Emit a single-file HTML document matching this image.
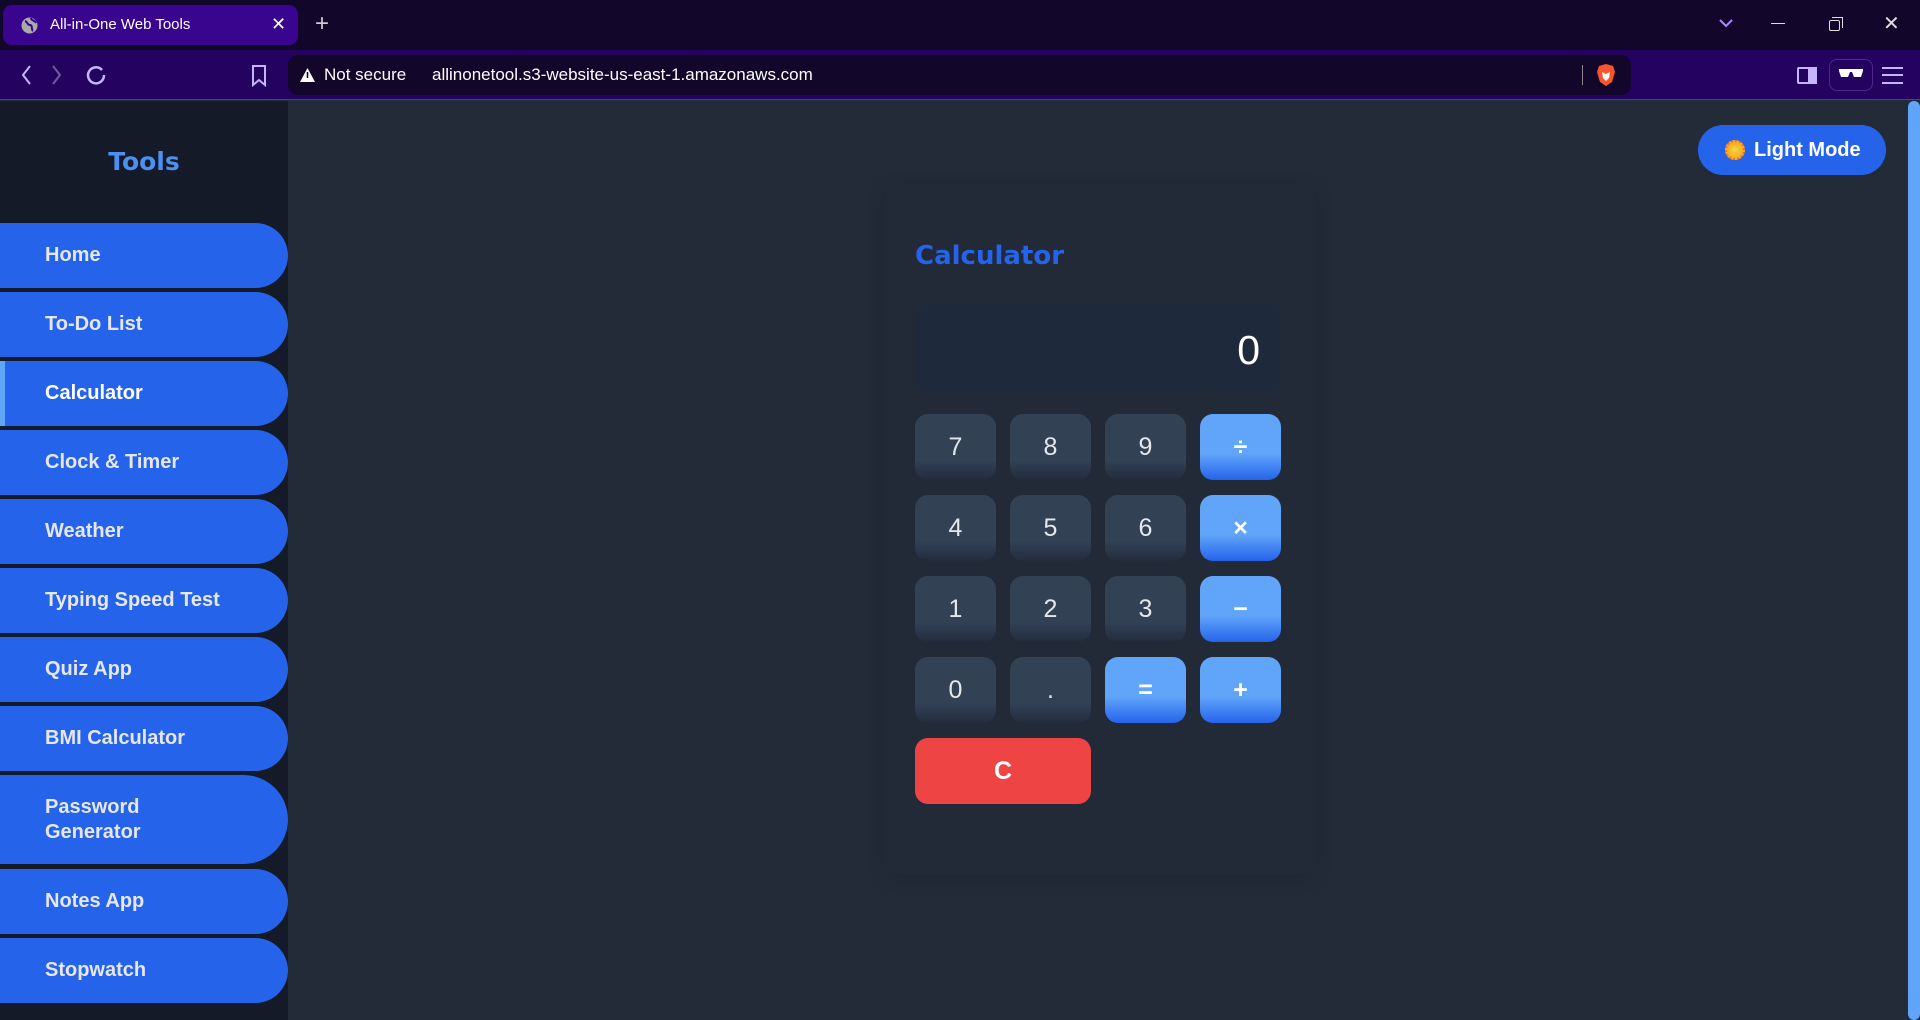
<!DOCTYPE html>
<html><head><meta charset="utf-8"><style>
*{box-sizing:border-box;margin:0;padding:0}
body{width:1920px;height:1020px;overflow:hidden;background:#232b39;font-family:"Liberation Sans",sans-serif;position:relative}
.tabbar{position:absolute;left:0;top:0;width:1920px;height:50px;background:#13062b}
.tab{position:absolute;left:3px;top:5px;width:295px;height:40px;background:#39058f;border-radius:9px;color:#fff;font-size:15px}
.toolbar{position:absolute;left:0;top:50px;width:1920px;height:50px;background:#23035f;border-bottom:1px solid #5a2fa8}
.url{position:absolute;left:288px;top:5px;width:1343px;height:40px;background:#13062b;border-radius:10px;color:#fff;font-size:17px}
.side{position:absolute;left:0;top:101px;width:288px;height:919px;background:#141a28}
.tools{position:absolute;top:46px;left:0;width:288px;text-align:center;color:#4d8ff0;font-weight:bold;font-size:25px;font-family:"DejaVu Sans",sans-serif}
.nav{position:absolute;left:0;width:288px;height:65px;background:#2563eb;border-radius:0 33px 33px 0;color:#e5e7eb;font-weight:bold;font-size:20px;padding-left:45px;display:flex;align-items:center;line-height:25px}
.nav.act{border-left:5px solid #60a5fa;padding-left:40px;color:#fff}
.card{position:absolute;left:884px;top:184px;width:432px;height:690px;background:#222a38;border-radius:16px;box-shadow:0 4px 20px rgba(0,0,0,.12)}
.title{position:absolute;left:915px;top:241px;color:#2563eb;font-weight:bold;font-size:26px;font-family:"DejaVu Sans",sans-serif}
.disp{position:absolute;left:915px;top:304px;width:365px;height:88px;background:#1e293b;border-radius:12px;color:#fff;font-size:41px;text-align:right;padding-right:20px;line-height:92px}
.b{position:absolute;width:81px;height:66px;border-radius:13px;background:linear-gradient(#334155 0,#334155 70%,#222c3d 100%);color:#e5e7eb;font-size:25px;text-align:center;line-height:66px}
.o{background:linear-gradient(#60a5fa 0,#60a5fa 60%,#2563eb 100%);color:#fff;font-weight:bold}
.c{background:#ef4444;color:#fff;font-weight:bold;width:176px}
.lm{position:absolute;left:1698px;top:125px;width:188px;height:50px;background:#2563eb;border-radius:25px;color:#fff;font-weight:bold;font-size:20px;line-height:50px;padding-left:56px}
.sun{position:absolute;left:27px;top:15px;width:20px;height:20px;border-radius:50%;background:radial-gradient(#fcd34d,#f59e0b);border:2px dotted #f97316}
.sb{position:absolute;left:1908px;top:101px;width:12px;height:919px;background:#60a5fa;border-radius:6px}
</style></head><body>
<div class="tabbar">
<div class="tab"><svg style="position:absolute;left:18px;top:12px" width="17" height="17"><circle cx="8.5" cy="8.5" r="8" fill="#aaa"/><path d="M4 4c3 1 2 4 5 4s1 5 3 6M10 1c0 3 4 2 5 5" stroke="#39058f" stroke-width="2" fill="none"/></svg><span style="position:absolute;left:47px;top:11px">All-in-One Web Tools</span><span style="position:absolute;left:268px;top:9px;font-size:18px">✕</span></div>
<span style="position:absolute;left:315px;top:10px;color:#ccc;font-size:24px">+</span>
<svg style="position:absolute;left:1718px;top:18px" width="16" height="10"><path d="M2 2l6 6 6-6" stroke="#a78bfa" stroke-width="2" fill="none"/></svg>
<div style="position:absolute;left:1771px;top:23px;width:14px;height:1px;background:#ddd"></div>
<div style="position:absolute;left:1829px;top:20px;width:11px;height:11px;border:1px solid #ddd;border-radius:2px"></div>
<div style="position:absolute;left:1832px;top:17px;width:11px;height:11px;border-top:1px solid #ddd;border-right:1px solid #ddd"></div>
<span style="position:absolute;left:1883px;top:11px;color:#ddd;font-size:20px">✕</span>
</div>
<div class="toolbar">
<svg style="position:absolute;left:18px;top:14px" width="90" height="22"><path d="M12 2L5 11l7 9" stroke="#c4b5fd" stroke-width="2" fill="none"/><path d="M35 2l7 9-7 9" stroke="#6d5aa0" stroke-width="2" fill="none"/><path d="M84 6a8 8 0 1 0 2 5" stroke="#c4b5fd" stroke-width="2.5" fill="none"/></svg>
<svg style="position:absolute;left:251px;top:15px" width="16" height="22"><path d="M2 1h12v19l-6-5-6 5z" stroke="#c4b5fd" stroke-width="2" fill="none"/></svg>
<div class="url"><svg style="position:absolute;left:11px;top:12px" width="17" height="16"><path d="M8.5 1L16 15H1z" fill="#fff"/><rect x="7.7" y="5" width="1.6" height="6" fill="#13062b"/></svg><span style="position:absolute;left:36px;top:10px">Not secure</span><span style="position:absolute;left:144px;top:10px">allinonetool.s3-website-us-east-1.amazonaws.com</span><div style="position:absolute;left:1294px;top:10px;width:1px;height:20px;background:#888"></div><svg style="position:absolute;left:1308px;top:8px" width="20" height="24"><path d="M3 3l7-2 7 2 2 6-3 10-6 4-6-4-3-10z" fill="#fb542b"/><path d="M6 9l4 2 4-2-1 6-3 3-3-3z" fill="#fff"/></svg></div>
<div style="position:absolute;left:1797px;top:17px;width:20px;height:17px;border:2px solid #c4b5fd;border-radius:2px"></div><div style="position:absolute;left:1808px;top:17px;width:9px;height:17px;background:#c4b5fd"></div>
<div style="position:absolute;left:1829px;top:9px;width:44px;height:32px;border:1px solid #4c2a8a;border-radius:8px"></div>
<svg style="position:absolute;left:1839px;top:18px" width="24" height="12"><path d="M0 1h24v2l-2 6h-7l-2-5h-2l-2 5H2L0 3z" fill="#fff"/></svg>
<div style="position:absolute;left:1882px;top:17px;width:21px;height:17px;border-top:2px solid #c4b5fd;border-bottom:2px solid #c4b5fd"></div><div style="position:absolute;left:1882px;top:24px;width:21px;height:2px;background:#c4b5fd"></div>
</div>
<div class="side">
<div class="tools">Tools</div>
</div>
<div class="nav" style="top:223px">Home</div>
<div class="nav" style="top:292px">To-Do List</div>
<div class="nav act" style="top:361px">Calculator</div>
<div class="nav" style="top:430px">Clock &amp; Timer</div>
<div class="nav" style="top:499px">Weather</div>
<div class="nav" style="top:568px">Typing Speed Test</div>
<div class="nav" style="top:637px">Quiz App</div>
<div class="nav" style="top:706px">BMI Calculator</div>
<div class="nav" style="top:775px;height:89px;border-radius:0 45px 45px 0">Password<br>Generator</div>
<div class="nav" style="top:869px">Notes App</div>
<div class="nav" style="top:938px">Stopwatch</div>
<div class="card"></div>
<div class="title">Calculator</div>
<div class="disp">0</div>
<div class="b" style="left:915px;top:414px">7</div><div class="b" style="left:1010px;top:414px">8</div><div class="b" style="left:1105px;top:414px">9</div><div class="b o" style="left:1200px;top:414px">÷</div>
<div class="b" style="left:915px;top:495px">4</div><div class="b" style="left:1010px;top:495px">5</div><div class="b" style="left:1105px;top:495px">6</div><div class="b o" style="left:1200px;top:495px">×</div>
<div class="b" style="left:915px;top:576px">1</div><div class="b" style="left:1010px;top:576px">2</div><div class="b" style="left:1105px;top:576px">3</div><div class="b o" style="left:1200px;top:576px">−</div>
<div class="b" style="left:915px;top:657px">0</div><div class="b" style="left:1010px;top:657px">.</div><div class="b o" style="left:1105px;top:657px">=</div><div class="b o" style="left:1200px;top:657px">+</div>
<div class="b c" style="left:915px;top:738px">C</div>
<div class="lm"><div class="sun"></div>Light Mode</div>
<div class="sb"></div>
</body></html>
